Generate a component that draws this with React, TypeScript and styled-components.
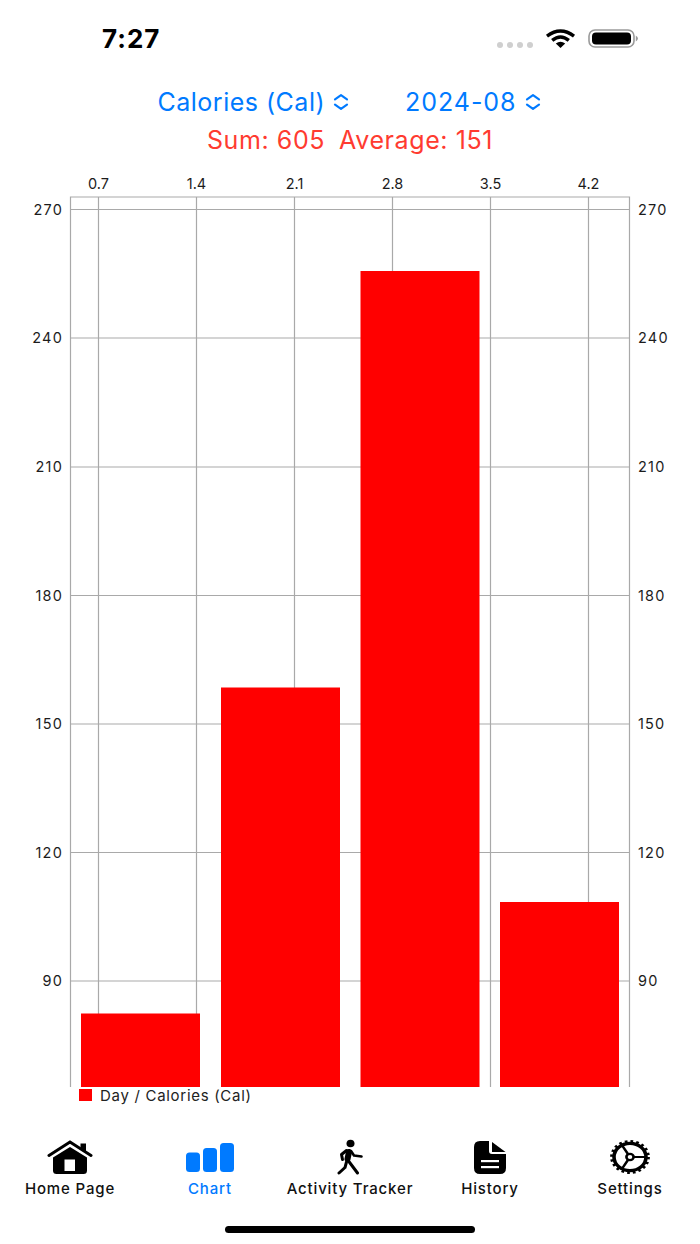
import React from "react";
import styled, { createGlobalStyle } from "styled-components";

const Global = createGlobalStyle`
  html, body { margin: 0; padding: 0; background: #fff; }
  body { font-family: Inter, "Liberation Sans", sans-serif; }
`;

const Screen = styled.div`
  width: 700px;
  height: 1244px;
  display: flex;
  flex-direction: column;
  background: #fff;
  overflow: hidden;
`;

const StatusBar = styled.div`
  height: 78px;
  flex: none;
  display: flex;
  align-items: flex-start;
  justify-content: space-between;
  padding: 24px 62px 0 102px;
  box-sizing: border-box;
`;

const Time = styled.div`
  font-size: 26px;
  line-height: 30px;
  font-weight: 700;
  letter-spacing: 1px;
  color: #000;
`;

const StatusIcons = styled.div`
  display: flex;
  align-items: flex-start;
  padding-top: 5px;
`;

const SignalDots = styled.div`
  display: flex;
  gap: 4px;
  margin: 13px 12px 0 0;
`;

const Dot = styled.span`
  width: 6px;
  height: 6px;
  border-radius: 50%;
  background: #cfcfcf;
`;

const Pickers = styled.div`
  height: 48px;
  flex: none;
  display: flex;
  justify-content: center;
  align-items: center;
  gap: 56px;
  padding-right: 2px;
`;

const Picker = styled.div<{ $spacing: number }>`
  display: flex;
  align-items: center;
  gap: 8px;
  color: #007aff;
  font-size: 25px;
  letter-spacing: ${(p) => p.$spacing}px;
`;

const Summary = styled.div`
  height: 28px;
  flex: none;
  display: flex;
  justify-content: center;
  align-items: center;
  gap: 14px;
  color: #ff3b30;
  font-size: 25px;
  letter-spacing: 0.6px;
`;

const ChartFrame = styled.svg`
  display: block;
  flex: none;
  width: 700px;
  height: 933px;
`;

const AxisText = styled.text<{ $wide?: boolean }>`
  font-family: Inter, "Liberation Sans", sans-serif;
  font-size: 14.5px;
  letter-spacing: ${(p) => (p.$wide ? "1.2px" : "0")};
  fill: #1c1c1c;
`;

const Legend = styled.div`
  flex: none;
  height: 16px;
  display: flex;
  align-items: center;
  gap: 8px;
  padding-left: 79px;
  font-size: 15px;
  letter-spacing: 0.7px;
  color: #222;
`;

const Swatch = styled.span`
  width: 13px;
  height: 12px;
  background: #ff0000;
`;

const TabBar = styled.nav`
  flex: none;
  display: grid;
  grid-template-columns: repeat(5, 140px);
  height: 88px;
  margin-top: 35px;
`;

const Tab = styled.div<{ $active?: boolean }>`
  display: flex;
  flex-direction: column;
  align-items: center;
  justify-content: space-between;
  height: 60px;
  font-size: 15px;
  font-weight: 500;
  letter-spacing: 0.85px;
  line-height: 18px;
  white-space: nowrap;
  color: ${(p) => (p.$active ? "#007aff" : "#111")};
`;

const TabIcon = styled.div`
  height: 38px;
  display: flex;
  align-items: center;
  justify-content: center;
`;

const HomeIndicatorRow = styled.div`
  flex: none;
  display: flex;
  justify-content: center;
`;

const HomeIndicator = styled.div`
  width: 250px;
  height: 7px;
  border-radius: 4px;
  background: #000;
`;

const Chevrons = () => (
  <svg width="16" height="18" viewBox="0 0 16 18" fill="none" stroke="#007aff" strokeWidth="2.2" strokeLinecap="round" strokeLinejoin="round">
    <path d="M2 6.3 L8 2.2 L14 6.3" />
    <path d="M2 11.7 L8 15.8 L14 11.7" />
  </svg>
);

const Wifi = () => (
  <svg width="31" height="19" viewBox="0 0 31 19" style={{ marginRight: 12 }}>
    <path d="M2 7.2 Q15.5 -3 29 7.2" fill="none" stroke="#000" strokeWidth="3.4" />
    <path d="M7.2 11.4 Q15.5 4.4 23.8 11.4" fill="none" stroke="#000" strokeWidth="3.4" />
    <path d="M10.8 14.6 Q15.5 10.8 20.2 14.6 L15.5 19 Z" fill="#000" />
  </svg>
);

const Battery = () => (
  <svg width="50" height="19" viewBox="0 0 50 19">
    <rect x="1" y="1" width="45" height="17" rx="6" fill="none" stroke="#9a9a9a" strokeWidth="1.6" />
    <rect x="4" y="3.5" width="39" height="12" rx="4" fill="#000" />
    <path d="M47.8 6.5 Q50 8 50 9.5 Q50 11 47.8 12.5 Z" fill="#9a9a9a" />
  </svg>
);

const HomeGlyph = () => (
  <svg width="46" height="34" viewBox="0 0 46 34">
    <path d="M33.5 3.5 H39 V13 L33.5 9 Z" fill="#000" />
    <path d="M2 15.5 L23 2 L44 15.5" fill="none" stroke="#000" strokeWidth="3" strokeLinecap="round" strokeLinejoin="miter" />
    <path d="M6 17.5 L23 7 L40 17.5 V30.5 Q40 34 36.5 34 H9.5 Q6 34 6 30.5 Z" fill="#000" />
    <rect x="17.5" y="19.5" width="10.5" height="11.5" fill="#fff" />
  </svg>
);

const ChartGlyph = () => (
  <svg width="48" height="29" viewBox="0 0 48 29" fill="#007aff">
    <rect x="0" y="9.5" width="14" height="19.5" rx="3.5" />
    <rect x="17" y="5" width="14" height="24" rx="3.5" />
    <rect x="34" y="0" width="14" height="29" rx="3.5" />
  </svg>
);

const WalkGlyph = () => (
  <svg width="28" height="36" viewBox="0 0 28 36" fill="none" stroke="#000" strokeLinecap="round" strokeLinejoin="round">
    <ellipse cx="14.5" cy="4.5" rx="4" ry="3.8" fill="#000" stroke="none" />
    <path d="M13 13 L11.5 20" strokeWidth="6" />
    <path d="M10.5 11.5 L5.5 15.5 L6.5 20.5" strokeWidth="3" />
    <path d="M15 12 L18 16.5 L25.5 17.5" strokeWidth="2.6" />
    <path d="M10.5 23 L9 28.5 L3 34" strokeWidth="3" />
    <path d="M12.5 22 L17 28 L21.5 34" strokeWidth="3" />
  </svg>
);

const DocGlyph = () => (
  <svg width="32" height="33" viewBox="0 0 32 33">
    <path d="M6 0 H15 V10 Q15 13 18 13 H32 V27 Q32 33 26 33 H6 Q0 33 0 27 V6 Q0 0 6 0 Z" fill="#000" />
    <path d="M18 1 L31.5 11 H18 Z" fill="#000" />
    <rect x="7" y="19" width="18" height="2.2" fill="#fff" />
    <rect x="7" y="25" width="18" height="2.2" fill="#fff" />
  </svg>
);

const GearGlyph = () => (
  <svg width="40" height="34" viewBox="0 0 40 40" preserveAspectRatio="none" fill="none" stroke="#000">
    <circle cx="20" cy="20" r="16" strokeWidth="3.6" />
    <circle cx="20" cy="20" r="18" strokeWidth="3.8" strokeDasharray="2.7 2.95" />
    <circle cx="20" cy="20" r="3.6" strokeWidth="2.6" />
    <path d="M23.6 20 H36 M18.2 23.1 L12 33.9 M18.2 16.9 L12 6.1" strokeWidth="2.6" />
  </svg>
);

const xTicks = [
  { x: 98.5, label: "0.7" },
  { x: 196.5, label: "1.4" },
  { x: 294.5, label: "2.1" },
  { x: 392.5, label: "2.8" },
  { x: 490.5, label: "3.5" },
  { x: 588.5, label: "4.2" },
];

const yTicks = [
  { y: 209.5, label: "270" },
  { y: 338, label: "240" },
  { y: 467, label: "210" },
  { y: 595.5, label: "180" },
  { y: 724, label: "150" },
  { y: 852.5, label: "120" },
  { y: 981, label: "90" },
];

const bars = [
  { x: 81, top: 1013.5 },
  { x: 221, top: 687.5 },
  { x: 360.5, top: 271 },
  { x: 500, top: 902 },
];

const CHART_TOP = 154;
const PLOT_TOP = 197;
const PLOT_BOTTOM = 1087;

const Chart = () => (
  <ChartFrame viewBox={`0 ${CHART_TOP} 700 933`}>
    <g stroke="#a9a9a9" strokeWidth="1.2">
      <path d={`M70.5 ${PLOT_BOTTOM} V${PLOT_TOP} H629.5 V${PLOT_BOTTOM}`} fill="none" />
      {xTicks.map((t) => (
        <line key={t.label} x1={t.x} x2={t.x} y1={PLOT_TOP} y2={PLOT_BOTTOM} />
      ))}
      {yTicks.map((t) => (
        <line key={t.label} x1={70.5} x2={629.5} y1={t.y} y2={t.y} />
      ))}
    </g>
    {bars.map((b) => (
      <rect key={b.x} x={b.x} y={b.top} width={119} height={PLOT_BOTTOM - b.top} fill="#ff0000" />
    ))}
    {xTicks.map((t) => (
      <AxisText key={t.label} x={t.x} y={189} textAnchor="middle">{t.label}</AxisText>
    ))}
    {yTicks.map((t) => (
      <React.Fragment key={t.label}>
        <AxisText $wide x={63} y={t.y + 5} textAnchor="end">{t.label}</AxisText>
        <AxisText $wide x={638} y={t.y + 5}>{t.label}</AxisText>
      </React.Fragment>
    ))}
  </ChartFrame>
);

export default function App() {
  return (
    <Screen>
      <Global />
      <StatusBar>
        <Time>7:27</Time>
        <StatusIcons>
          <SignalDots>
            <Dot /><Dot /><Dot /><Dot />
          </SignalDots>
          <Wifi />
          <Battery />
        </StatusIcons>
      </StatusBar>
      <Pickers>
        <Picker $spacing={0.5}>Calories (Cal)<Chevrons /></Picker>
        <Picker $spacing={0.95}>2024-08<Chevrons /></Picker>
      </Pickers>
      <Summary>
        <span>Sum: 605</span>
        <span>Average: 151</span>
      </Summary>
      <Chart />
      <Legend><Swatch />Day / Calories (Cal)</Legend>
      <TabBar>
        <Tab><TabIcon><HomeGlyph /></TabIcon>Home Page</Tab>
        <Tab $active><TabIcon><ChartGlyph /></TabIcon>Chart</Tab>
        <Tab><TabIcon><WalkGlyph /></TabIcon>Activity Tracker</Tab>
        <Tab><TabIcon><DocGlyph /></TabIcon>History</Tab>
        <Tab><TabIcon><GearGlyph /></TabIcon>Settings</Tab>
      </TabBar>
      <HomeIndicatorRow><HomeIndicator /></HomeIndicatorRow>
    </Screen>
  );
}
